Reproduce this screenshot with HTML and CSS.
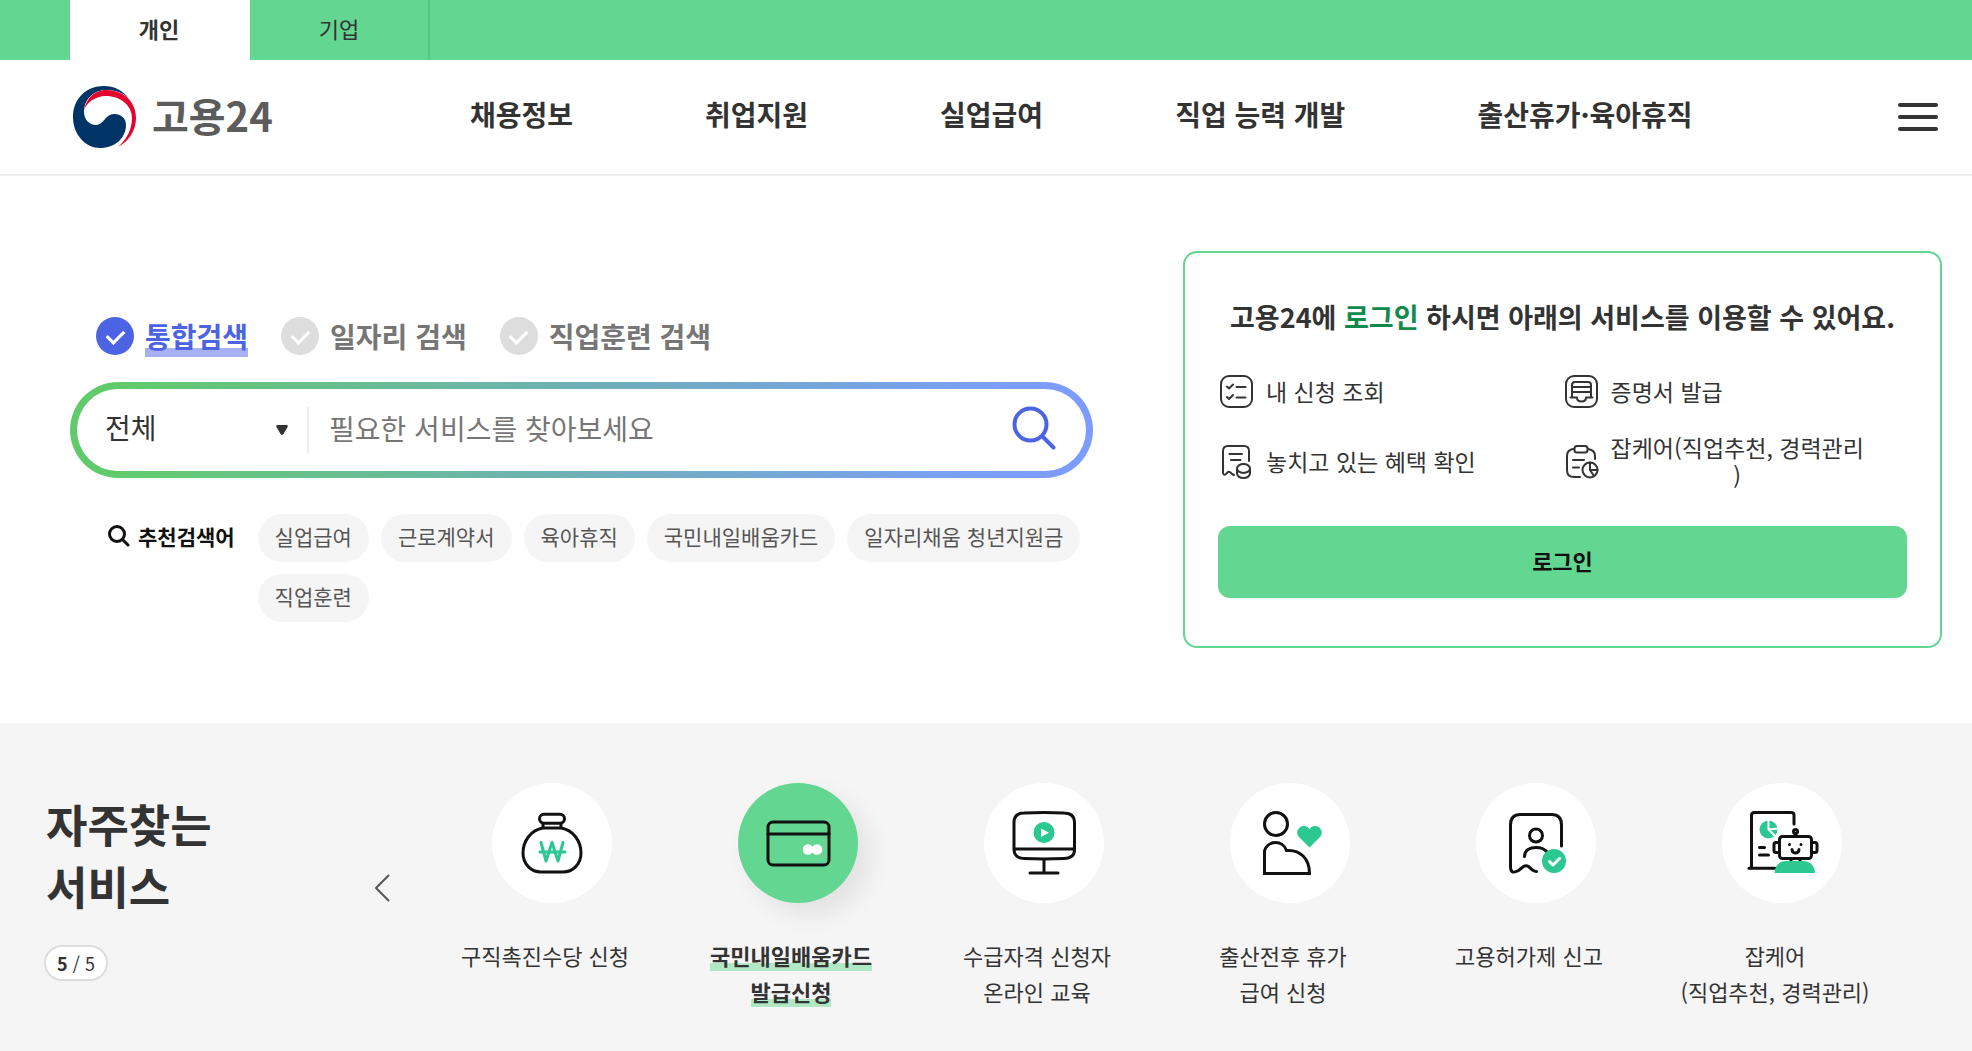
FILE: index.html
```html
<!DOCTYPE html>
<html lang="ko">
<head>
<meta charset="utf-8">
<meta name="viewport" content="width=device-width, initial-scale=1">
<title>고용24</title>
<link rel="stylesheet" href="styles.css">
</head>
<body>
<div class="topbar">
  <a class="topbar-tab is-active" href="#">개인</a>
  <a class="topbar-tab" href="#">기업</a>
</div>

<header class="header">
  <a class="logo" href="#">
    <svg class="logo-mark" viewBox="0 0 66 64" aria-hidden="true">
      <path fill="#003466" d="M57 14C51 5 42 1 32 1 14 1 1 14 1 32s13 31 27 31c15 0 26-10 26-23 0-7-5-11-12-11-9 0-10 11-18 11-7 0-12-6-12-13C12 14 22 5 34 5c10 0 18 3 23 9Z"/>
      <path fill="#e8002c" d="M12 26C14 12 24 5 34 5c18 0 30 12 30 28 0 13-8 24-18 29 9-8 14-18 14-29C60 20 48 11 34 11c-11 0-20 7-22 15Z"/>
    </svg>
    <span class="logo-text">고용24</span>
  </a>
  <nav class="nav">
    <a href="#">채용정보</a>
    <a href="#">취업지원</a>
    <a href="#">실업급여</a>
    <a href="#">직업 능력 개발</a>
    <a href="#">출산휴가·육아휴직</a>
  </nav>
  <button class="menu-button" type="button" aria-label="전체메뉴"><span></span><span></span><span></span></button>
</header>

<main>
  <section class="hero">
    <form class="search">
      <div class="search-types">
        <label class="search-type"><input type="radio" name="type" checked><span>통합검색</span></label>
        <label class="search-type"><input type="radio" name="type"><span>일자리 검색</span></label>
        <label class="search-type"><input type="radio" name="type"><span>직업훈련 검색</span></label>
      </div>
      <div class="search-box">
        <div class="search-scope">
          <select aria-label="검색 범위"><option>전체</option></select>
          <svg class="caret" viewBox="0 0 12 10" aria-hidden="true"><path d="M1.500 0h9q2 0 1 2L7.500 9q-1.500 2-3 0L.5 2q-1-2 1-2Z"/></svg>
        </div>
        <input class="search-input" type="text" aria-label="검색어" placeholder="필요한 서비스를 찾아보세요">
        <button class="search-button" type="submit" aria-label="검색">
          <svg viewBox="0 0 44 44" aria-hidden="true"><circle cx="18.500" cy="18.500" r="16"/><path d="m30.500 30.500 11 11"/></svg>
        </button>
      </div>
      <div class="keywords">
        <div class="keywords-title">
          <svg viewBox="0 0 22 22" aria-hidden="true"><circle cx="9" cy="9" r="7.500"/><path d="m14.500 14.500 5.500 5.500"/></svg>
          <span>추천검색어</span>
        </div>
        <div class="chips">
          <a href="#">실업급여</a>
          <a href="#">근로계약서</a>
          <a href="#">육아휴직</a>
          <a href="#">국민내일배움카드</a>
          <a href="#">일자리채움 청년지원금</a>
          <a href="#">직업훈련</a>
        </div>
      </div>
    </form>

    <aside class="login">
      <h2>고용24에 <em>로그인</em> 하시면 아래의 서비스를 이용할 수 있어요.</h2>
      <ul class="features">
        <li>
          <svg viewBox="0 0 34 34" aria-hidden="true"><rect x="1" y="1" width="31" height="31" rx="8"/><path d="m7 11.500 2 2 4-4M16.500 12h9M7 22l2 2 4-4M16.500 22.500h9"/></svg>
          <span>내 신청 조회</span>
        </li>
        <li>
          <svg viewBox="0 0 34 34" aria-hidden="true"><rect x="1" y="1" width="31" height="31" rx="8"/><path d="M7 22V10q0-3 3-3h13q3 0 3 3v12M7 12h19M7 17h19M5.500 22.500H12q0 4 4.500 4t4.500-4h6.500"/></svg>
          <span>증명서 발급</span>
        </li>
        <li>
          <svg viewBox="0 0 34 34" aria-hidden="true"><path d="M29 16V6q0-5-5-5H8Q3 1 3 6v21q0 4 3 2l2-2q2-1 4 2l2 1M9.500 9H22M11 15h9.500"/><ellipse cx="23.500" cy="23.500" rx="6.500" ry="4.500"/><path d="M17 23.500v5q1 4.500 6.500 4.500t6.500-4.500v-5"/></svg>
          <span>놓치고 있는 혜택 확인</span>
        </li>
        <li>
          <svg viewBox="0 0 34 34" aria-hidden="true"><path d="M9 4H8Q2 5 2 11v14q0 7 7 7h6M23 4q7 1 7 7v3M8 15h11M8 22.500h6"/><rect x="9.500" y="1" width="13" height="6.500" rx="2.500"/><circle cx="25" cy="25" r="7.500"/><path d="M25 17.500V25h7.500M25 25l4 6"/></svg>
          <span>잡케어(직업추천, 경력관리<br>)</span>
        </li>
      </ul>
      <button class="login-button" type="button">로그인</button>
    </aside>
  </section>

  <section class="services">
    <div class="services-head">
      <h2>자주찾는<br>서비스</h2>
      <p class="pager"><b>5</b> / 5</p>
    </div>
    <button class="prev" type="button" aria-label="이전">
      <svg viewBox="0 0 16 28" aria-hidden="true"><path d="M14.500 1.500 2 14l12.500 12.500"/></svg>
    </button>
    <ul class="service-list">
      <li><a class="service" href="#">
        <svg class="service-icon" viewBox="0 0 120 120" aria-hidden="true">
          <rect x="47.500" y="31.200" width="25" height="9" rx="4.500"/><path d="M51 40.500V45h18v-4.500M51 45c-12 2-20 13-20 25 0 11 8 19 18 19h22c10 0 18-8 18-19 0-12-8-23-20-25"/>
          <path class="accent-line" d="m49 59.500 5 18.500 6-18.500L66 78l5-18.500M48 69h25"/>
        </svg>
        <span class="service-name"><span>구직촉진수당 신청</span></span></a></li>
      <li><a class="service is-active" href="#">
        <svg class="service-icon" viewBox="0 0 120 120" aria-hidden="true">
          <rect x="30" y="39" width="61" height="43" rx="5"/><path d="M30 51h61"/><g class="white"><circle cx="70" cy="66.500" r="5.300"/><circle cx="79" cy="66.500" r="5.300"/></g>
        </svg>
        <span class="service-name"><span>국민내일배움카드<br>발급신청</span></span></a></li>
      <li><a class="service" href="#">
        <svg class="service-icon" viewBox="0 0 120 120" aria-hidden="true">
          <path d="M40 30q20-1 40 0 10 0 10.500 9v28q0 8-10.500 8.500-20 .8-40 0-9.500-.5-10-8.500V39q.5-9 10-9ZM30 66h60.500M60 76v14M46 90h28"/>
          <circle class="accent" cx="60" cy="49.500" r="10.500"/><path class="white" d="m57 45.500 8 4.300-8 4.200Z"/>
        </svg>
        <span class="service-name"><span>수급자격 신청자<br>온라인 교육</span></span></a></li>
      <li><a class="service" href="#">
        <svg class="service-icon sharp" viewBox="0 0 120 120" aria-hidden="true">
          <circle cx="46" cy="41" r="11.500"/><path d="M34.500 90.500V68a11.500 11.500 0 0 1 22-.5l.5 0c13-1 22.500 8 22.500 23Z"/>
          <path class="accent" d="M79.500 64.500 69 54c-4.500-5 0-11 5-11 3 0 4.500 1.500 5.500 3.500 1-2 2.500-3.500 5.500-3.500 5 0 9.500 6 5 11Z"/>
        </svg>
        <span class="service-name"><span>출산전후 휴가<br>급여 신청</span></span></a></li>
      <li><a class="service" href="#">
        <svg class="service-icon" viewBox="0 0 120 120" aria-hidden="true">
          <path d="M85.500 63V42q0-10.500-10-10.500h-31q-10 0-10 10.500v42q0 8 8 3.500l5-4q2.500-1.500 5 0l4 3.500q2 1.500 4 1.500"/><circle cx="60" cy="52.500" r="6.500"/><path d="M48.500 73.500C48.500 67 54 64.500 60 64.500c5 0 9 1.500 11.500 5"/>
          <circle class="accent" cx="78" cy="78" r="12"/><path class="white-line" d="m73.500 78.500 3.500 3.500 6.500-6.500"/>
        </svg>
        <span class="service-name"><span>고용허가제 신고</span></span></a></li>
      <li><a class="service" href="#">
        <svg class="service-icon" viewBox="0 0 120 120" aria-hidden="true">
          <path d="M72 41v-9q0-2.500-3-2.500H32.500q-3 0-3 3V85M27 85.300h26M37.500 64.500h5M37.500 72h9"/>
          <circle class="accent" cx="46.500" cy="46.500" r="9"/><path class="white-line thin" d="M46.500 36v10.500l10-1M46.500 46.500l8 8"/>
          <circle cx="73.500" cy="48.500" r="2"/><rect x="57.500" y="53.500" width="32" height="22" rx="3"/><path d="M73.500 51v2M57 59.500h-3q-2 0-2 2v6q0 2 2 2h3M90 59.500h3q2 0 2 2v6q0 2-2 2h-3M69 76v3M78 76v3M70 66.500c0 4.500 7 4.500 7 0M67.500 61.500v.1M79 61.500v.1"/>
          <path class="accent" d="M52.500 90c.5-8 5.500-12 11.500-12h17c7 0 12 5 12 12Z"/>
        </svg>
        <span class="service-name"><span>잡케어<br>(직업추천, 경력관리)</span></span></a></li>
    </ul>
  </section>
</main>
</body>
</html>
```
FILE: styles.css
```css
:root {
  --green: #63d692;
  --accent: #2bc88f;
  --ink: #333;
  --blue: #4c63e3;
  --grey: #f5f5f5;
}

* {
  box-sizing: border-box;
}

body {
  margin: 0;
  background: #fff;
  color: var(--ink);
  font-family: "Noto Sans CJK KR", sans-serif;
  font-size: 22px;
}

a {
  color: inherit;
  text-decoration: none;
}

ul,
h2,
p {
  margin: 0;
  padding: 0;
  list-style: none;
}

button,
input,
select {
  margin: 0;
  padding: 0;
  border: 0;
  background: none;
  color: inherit;
  font: inherit;
}

svg {
  display: block;
  flex: none;
  fill: none;
  stroke: var(--ink);
  stroke-width: 2;
  stroke-linecap: round;
  stroke-linejoin: round;
}

/* Top bar */
.topbar {
  display: flex;
  height: 60px;
  padding-left: 70px;
  background: var(--green);
}

.topbar-tab {
  width: 180px;
  border-right: 2px solid #58c585;
  line-height: 56px;
  text-align: center;
}

.topbar-tab.is-active {
  border-right-color: #fff;
  background: #fff;
  font-weight: 700;
}

/* Header */
.header {
  display: flex;
  align-items: center;
  height: 116px;
  padding: 0 34px 0 72px;
  border-bottom: 2px solid #eee;
}

.logo {
  display: flex;
  align-items: center;
  gap: 14px;
  width: 398px;
}

.logo-mark {
  width: 66px;
  height: 64px;
  stroke: none;
}

.logo-text {
  padding-bottom: 4px;
  color: #5c5c5c;
  font-size: 40px;
  font-weight: 700;
  line-height: 60px;
}

.nav {
  display: flex;
  gap: 132px;
  padding-bottom: 6px;
  font-size: 28px;
  font-weight: 700;
  line-height: 40px;
  white-space: nowrap;
}

.menu-button {
  display: grid;
  gap: 8px;
  width: 40px;
  margin-left: auto;
}

.menu-button span {
  height: 4px;
  border-radius: 2px;
  background: var(--ink);
}

/* Search */
.hero {
  display: grid;
  grid-template-columns: minmax(0, 1023fr) minmax(0, 759fr);
  gap: 90px;
  padding: 75px 30px 75px 70px;
}

.search {
  padding-top: 64px;
}

.search-types {
  display: flex;
  gap: 33px;
  padding-left: 26px;
}

.search-type {
  display: flex;
  align-items: center;
  gap: 11px;
  color: #767676;
  font-size: 28px;
  font-weight: 700;
  line-height: 42px;
}

.search-type input {
  display: grid;
  place-items: center;
  width: 38px;
  height: 38px;
  border-radius: 50%;
  background: #ddd;
  appearance: none;
}

.search-type input::before {
  content: "";
  width: 8px;
  height: 14px;
  border: solid #fff;
  border-width: 0 3px 3px 0;
  transform: rotate(45deg) translate(-1px, -1px);
}

.search-type input:checked {
  background: var(--blue);
}

.search-type input:checked + span {
  background: linear-gradient(#a7b1f1, #a7b1f1) 0 33px / 100% 9px no-repeat;
  color: var(--blue);
}

.search-box {
  display: flex;
  align-items: center;
  height: 96px;
  margin-top: 25px;
  padding: 0 30px 0 28px;
  border: 7px solid transparent;
  border-radius: 48px;
  background:
    linear-gradient(#fff, #fff) padding-box,
    linear-gradient(95deg, #61cb6b 5%, #70b0b8 50%, #7d9cff 95%) border-box;
  font-size: 28px;
}

.search-scope {
  display: flex;
  align-items: center;
  width: 204px;
  height: 46px;
  padding-right: 19px;
  border-right: 2px solid #eee;
}

.search-scope select {
  flex: 1;
  height: 46px;
  padding-bottom: 6px;
  appearance: none;
}

.caret {
  width: 12px;
  height: 10px;
  fill: var(--ink);
  stroke: none;
}

.search-input {
  flex: 1;
  min-width: 0;
  height: 60px;
  padding: 0 0 4px 20px;
}

.search-input::placeholder {
  color: #767676;
}

.search-button {
  padding-bottom: 4px;
}

.search-button svg {
  width: 44px;
  height: 44px;
  stroke: var(--blue);
  stroke-width: 4;
}

.keywords {
  display: flex;
  gap: 23px;
  padding: 36px 0 0 38px;
}

.keywords-title {
  display: flex;
  flex: none;
  align-items: center;
  gap: 8px;
  height: 44px;
  color: #111;
  font-size: 21px;
  font-weight: 700;
}

.keywords-title svg {
  width: 22px;
  height: 22px;
  stroke: #111;
  stroke-width: 3;
}

.chips {
  display: flex;
  flex-wrap: wrap;
  gap: 12px;
}

.chips a {
  padding: 0 17px 4px;
  border-radius: 24px;
  background: var(--grey);
  color: #555;
  font-size: 21px;
  line-height: 44px;
}

/* Login card */
.login {
  padding: 44px 33px 48px;
  border: 2px solid var(--green);
  border-radius: 14px;
}

.login h2 {
  font-size: 27px;
  font-weight: 700;
  line-height: 40px;
  text-align: center;
  white-space: nowrap;
}

.login em {
  color: #128a4b;
  font-style: normal;
}

.features {
  display: grid;
  grid-template-columns: 1fr 1fr;
  grid-auto-rows: 56px;
  gap: 14px 0;
  margin: 27px 0 36px;
  font-size: 23px;
  line-height: 28px;
}

.features li {
  display: flex;
  align-items: center;
  gap: 12px;
  padding-left: 2px;
  text-align: center;
}

.features span {
  padding-bottom: 3px;
}

.features svg {
  width: 34px;
  height: 34px;
}

.login-button {
  width: 100%;
  height: 72px;
  padding-bottom: 4px;
  border-radius: 12px;
  background: var(--green);
  color: #111;
  font-size: 22px;
  font-weight: 700;
}

/* Frequently used services */
.services {
  display: flex;
  padding: 60px 67px 42px 44px;
  background: var(--grey);
}

.services-head {
  width: 330px;
  padding-top: 10px;
}

.services-head h2 {
  padding-left: 2px;
  font-size: 45px;
  font-weight: 700;
  line-height: 62px;
}

.pager {
  width: 64px;
  margin-top: 28px;
  border: 2px solid #ddd;
  border-radius: 18px;
  background: #fff;
  font-size: 18px;
  line-height: 32px;
  text-align: center;
}

.pager b {
  font-weight: 700;
}

.prev {
  align-self: flex-start;
  width: 55px;
  padding-top: 91px;
}

.prev svg {
  width: 16px;
  height: 28px;
  stroke: #555;
  stroke-width: 2;
}

.service-list {
  display: grid;
  flex: 1;
  grid-template-columns: repeat(6, minmax(0, 1fr));
}

.service {
  display: flex;
  flex-direction: column;
  align-items: center;
  gap: 34px;
}

.service-icon {
  width: 120px;
  height: 120px;
  border-radius: 50%;
  background: #fff;
  stroke: #111;
  stroke-width: 3;
}

.service-icon.sharp {
  stroke-linejoin: miter;
}

.service-icon .accent,
.service-icon .white {
  fill: var(--accent);
  stroke: none;
}

.service-icon .white {
  fill: #fff;
}

.service-icon .accent-line {
  stroke: var(--accent);
}

.service-icon .white-line {
  stroke: #fff;
}

.service-icon .thin {
  stroke-width: 2;
}

.service-name {
  padding-right: 14px;
  line-height: 36px;
  text-align: center;
  white-space: nowrap;
}

.is-active .service-icon {
  background: var(--green);
  box-shadow: 12px 12px 24px rgba(0, 0, 0, 0.08);
}

.is-active .service-name {
  font-weight: 700;
}

.is-active .service-name span {
  background: linear-gradient(transparent 75%, #b0e8c5 75%);
}
```
